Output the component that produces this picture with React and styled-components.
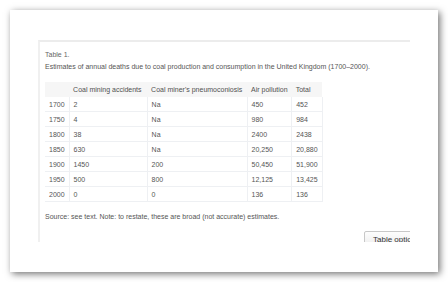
import styled, { createGlobalStyle } from "styled-components";

const GlobalStyle = createGlobalStyle`
  html, body {
    margin: 0;
    padding: 0;
    background: #ffffff;
  }
  body {
    font-family: "Liberation Sans", Arial, sans-serif;
  }
`;

const Page = styled.div`
  width: 448px;
  height: 282px;
  padding: 10px;
  box-sizing: border-box;
  overflow: hidden;
`;

const Card = styled.div`
  width: 428px;
  height: 262px;
  background: #fff;
  box-shadow: 2px 2px 7px rgba(0, 0, 0, 0.55);
  padding: 30px 28px 30px 28px;
  box-sizing: border-box;
`;

const Viewport = styled.div`
  width: 372px;
  height: 202px;
  overflow: hidden;
`;

const Panel = styled.div`
  width: 420px;
  border-top: 2px solid #ececec;
  border-left: 2px solid #f0f0f0;
  padding: 5px 0 0 5px;
  color: #555;
  font-size: 7px;
  line-height: 9px;
`;

const Caption = styled.p`
  margin: 3px 0 0;
  color: ${({ $dark }) => ($dark ? "#555" : "#666")};
`;

const Table = styled.table`
  border-collapse: collapse;
  margin-top: 11px;
  table-layout: fixed;
`;

const Th = styled.th`
  text-align: left;
  font-weight: normal;
  background: #f6f6f6;
  padding: 3px 4px;
  height: 9px;
  width: ${({ $w }) => $w}px;
  white-space: nowrap;
  color: #505050;
`;

const Td = styled.td`
  padding: 3px 4px 2px;
  height: 9px;
  border: 1px solid #eef0f3;
  border-top: none;
  border-left: ${({ $first }) => ($first ? "none" : "1px solid #eef0f3")};
  white-space: nowrap;
`;

const Note = styled.p`
  margin: 10px 0 0;
`;

const ButtonRow = styled.div`
  display: flex;
  padding-left: 319px;
  margin-top: 10px;
`;

const Button = styled.button`
  font-family: "Liberation Sans", Arial, sans-serif;
  font-size: 8px;
  line-height: 9px;
  color: #333;
  background: linear-gradient(#fdfdfd, #ececec);
  border: 1px solid #c8c8c8;
  border-radius: 2px;
  padding: 3px 8px;
  white-space: nowrap;
  width: 60px;
  text-align: left;
`;

const widths = [14, 70, 92, 36, 22];
const headers = ["", "Coal mining accidents", "Coal miner's pneumoconiosis", "Air pollution", "Total"];
const rows = [
  ["1700", "2", "Na", "450", "452"],
  ["1750", "4", "Na", "980", "984"],
  ["1800", "38", "Na", "2400", "2438"],
  ["1850", "630", "Na", "20,250", "20,880"],
  ["1900", "1450", "200", "50,450", "51,900"],
  ["1950", "500", "800", "12,125", "13,425"],
  ["2000", "0", "0", "136", "136"],
];

export default function App() {
  return (
    <>
      <GlobalStyle />
      <Page>
        <Card>
          <Viewport>
            <Panel>
              <Caption>Table 1.</Caption>
              <Caption $dark>
                Estimates of annual deaths due to coal production and consumption in the United Kingdom (1700–2000).
              </Caption>
              <Table>
                <thead>
                  <tr>
                    {headers.map((h, i) => (
                      <Th key={i} $w={widths[i]}>{h}</Th>
                    ))}
                  </tr>
                </thead>
                <tbody>
                  {rows.map((r) => (
                    <tr key={r[0]}>
                      {r.map((c, i) => (
                        <Td key={i} $first={i === 0}>{c}</Td>
                      ))}
                    </tr>
                  ))}
                </tbody>
              </Table>
              <Note>Source: see text. Note: to restate, these are broad (not accurate) estimates.</Note>
              <ButtonRow>
                <Button>Table options</Button>
              </ButtonRow>
            </Panel>
          </Viewport>
        </Card>
      </Page>
    </>
  );
}
